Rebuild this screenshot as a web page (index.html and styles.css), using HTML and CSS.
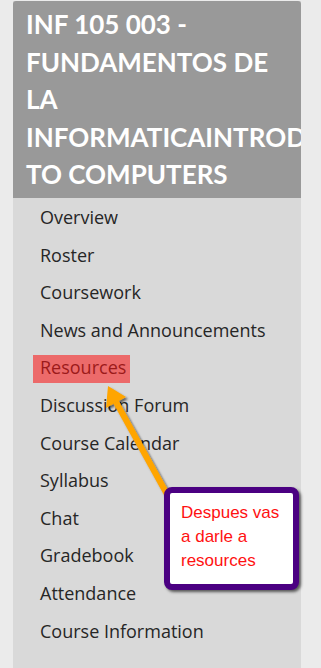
FILE: index.html
```html
<!DOCTYPE html>
<html lang="en">
<head>
    <meta charset="UTF-8">
    <meta name="viewport" content="width=device-width, initial-scale=1.0">
    <title>Course menu</title>
    <link rel="stylesheet" href="styles.css">
</head>
<body>
    <div class="panel">
        <div class="course-title">INF 105 003 - FUNDAMENTOS DE LA INFORMATICAINTRODUCTION TO COMPUTERS</div>
        <ul class="menu">
            <li><a href="#">Overview</a></li>
            <li><a href="#">Roster</a></li>
            <li><a href="#">Coursework</a></li>
            <li><a href="#">News and Announcements</a></li>
            <li><a href="#" class="marked">Resources</a></li>
            <li><a href="#">Discussion Forum</a></li>
            <li><a href="#">Course Calendar</a></li>
            <li><a href="#">Syllabus</a></li>
            <li><a href="#">Chat</a></li>
            <li><a href="#">Gradebook</a></li>
            <li><a href="#">Attendance</a></li>
            <li><a href="#">Course Information</a></li>
        </ul>
    </div>

    <svg class="arrow" width="321" height="668" viewBox="0 0 321 668">
        <defs>
            <filter id="shade" x="-20%" y="-20%" width="140%" height="140%">
                <feDropShadow dx="2" dy="2" stdDeviation="1.2" flood-color="#000" flood-opacity="0.55"/>
            </filter>
        </defs>
        <g filter="url(#shade)">
            <line x1="168" y1="496" x2="116" y2="402" stroke="#ffa500" stroke-width="6"/>
            <polygon points="108,386 106,408 126,397" fill="#ffa500"/>
        </g>
    </svg>

    <div class="note">Despues vas a darle a resources</div>
</body>
</html>
```

FILE: styles.css
```css
body {
    margin: 0;
    background-color: #ebebeb;
    height: 668px;
    overflow: hidden;
}

.panel {
    margin-left: 13px;
    margin-top: 1px;
    width: 288px;
    height: 667px;
    background-color: #d9d9d9;
    overflow: hidden;
}

.course-title {
    background-color: #999999;
    border-radius: 3px 3px 0 0;
    color: #fff;
    font-family: Lato, "Liberation Sans", sans-serif;
    font-weight: bold;
    font-size: 26px;
    line-height: 37.5px;
    padding: 5px 0 4.5px 13px;
}

.menu {
    list-style: none;
    margin: 0;
    padding: 7px 0 0 20px;
}

.menu li {
    height: 37.6px;
}

.menu a {
    display: inline-block;
    padding: 1px 7px 4px;
    color: #262626;
    text-decoration: none;
    font-family: "Open Sans", "Liberation Sans", sans-serif;
    font-size: 18px;
    line-height: 23px;
}

.menu a.marked {
    padding-right: 4px;
    background-color: #ec6a6a;
    color: #9c1a1a;
}

.arrow {
    position: absolute;
    left: 0;
    top: 0;
}

.note {
    position: absolute;
    left: 164px;
    top: 487px;
    width: 101px;
    height: 83px;
    padding: 8px 11px 0;
    background-color: #fff;
    border: 6px solid #4b0082;
    border-radius: 8px;
    box-shadow: 2px 2px 3px rgba(0, 0, 0, 0.6);
    color: #ff1111;
    font-family: "Liberation Sans", Arial, sans-serif;
    font-size: 17px;
    line-height: 24px;
}
```
